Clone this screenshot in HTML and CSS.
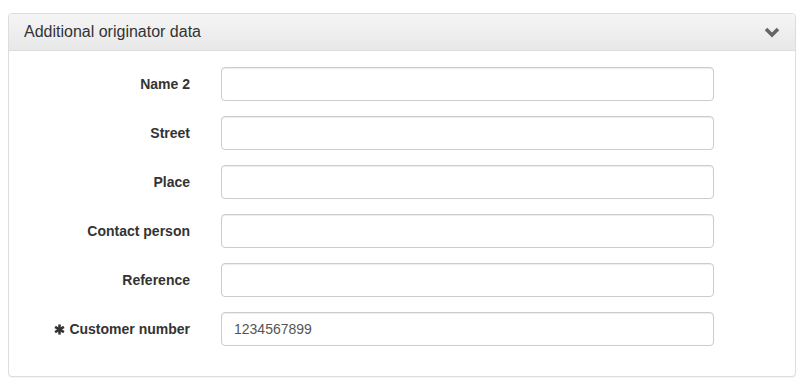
FILE: index.html
```html
<!DOCTYPE html>
<html lang="en">
<head>
  <meta charset="UTF-8">
  <title>Additional originator data</title>
  <link rel="stylesheet" href="styles.css">
</head>
<body>

  <div class="panel">
    <div class="panel-heading">
      <span class="panel-title">Additional originator data</span>
      <svg class="chevron" width="16" height="11" viewBox="0 0 16 11">
        <polyline points="2,2 8,8 14,2" fill="none" stroke="#666" stroke-width="3.6" stroke-linejoin="miter"/>
      </svg>
    </div>

    <div class="panel-body">
      <form class="form-grid">
        <label class="control-label" for="name2">Name 2</label>
        <input id="name2" class="form-control" type="text">

        <label class="control-label" for="street">Street</label>
        <input id="street" class="form-control" type="text">

        <label class="control-label" for="place">Place</label>
        <input id="place" class="form-control" type="text">

        <label class="control-label" for="contact">Contact person</label>
        <input id="contact" class="form-control" type="text">

        <label class="control-label" for="reference">Reference</label>
        <input id="reference" class="form-control" type="text">

        <!-- required field -->
        <label class="control-label" for="customerNo">
          <svg class="required" width="11" height="11" viewBox="0 0 12 12">
            <g stroke="#333" stroke-width="2.8" stroke-linecap="butt">
              <line x1="6" y1="0.5" x2="6" y2="11.5"/>
              <line x1="1.2" y1="3.2" x2="10.8" y2="8.8"/>
              <line x1="1.2" y1="8.8" x2="10.8" y2="3.2"/>
            </g>
          </svg>
          Customer number
        </label>
        <input id="customerNo" class="form-control" type="text" value="1234567899">
      </form>
    </div>
  </div>

</body>
</html>
```

FILE: styles.css
```css
body {
  margin: 0;
  padding: 13px 7px 8px 8px;
  font-family: "Liberation Sans", Arial, sans-serif;
  font-size: 14px;
  color: #333;
  background: #fff;
}
.panel {
  border: 1px solid #ddd;
  border-radius: 4px;
  box-shadow: 0 1px 1px rgba(0, 0, 0, 0.05);
  background: #fff;
}
.panel-heading {
  display: flex;
  justify-content: space-between;
  align-items: center;
  padding: 8px 15px;
  line-height: 20px;
  background: linear-gradient(to bottom, #f5f5f5 0%, #e8e8e8 100%);
  border-bottom: 1px solid #ddd;
  border-radius: 3px 3px 0 0;
}
.panel-title {
  font-size: 16px;
  color: #333;
}
.chevron {
  display: block;
}
.panel-body {
  padding: 16px 15px 15px;
}
.form-grid {
  display: grid;
  grid-template-columns: 166px 493px;
  column-gap: 31px;
  row-gap: 15px;
  align-items: center;
  margin-bottom: 15px;
}
.control-label {
  text-align: right;
  font-weight: bold;
  line-height: 20px;
}
.required {
  vertical-align: -1px;
  margin-right: 1px;
}
.form-control {
  box-sizing: border-box;
  width: 493px;
  height: 34px;
  padding: 6px 12px;
  font-family: "Liberation Sans", Arial, sans-serif;
  font-size: 14px;
  color: #555;
  border: 1px solid #ccc;
  border-radius: 4px;
  box-shadow: inset 0 1px 1px rgba(0, 0, 0, 0.075);
  background: #fff;
}
```
